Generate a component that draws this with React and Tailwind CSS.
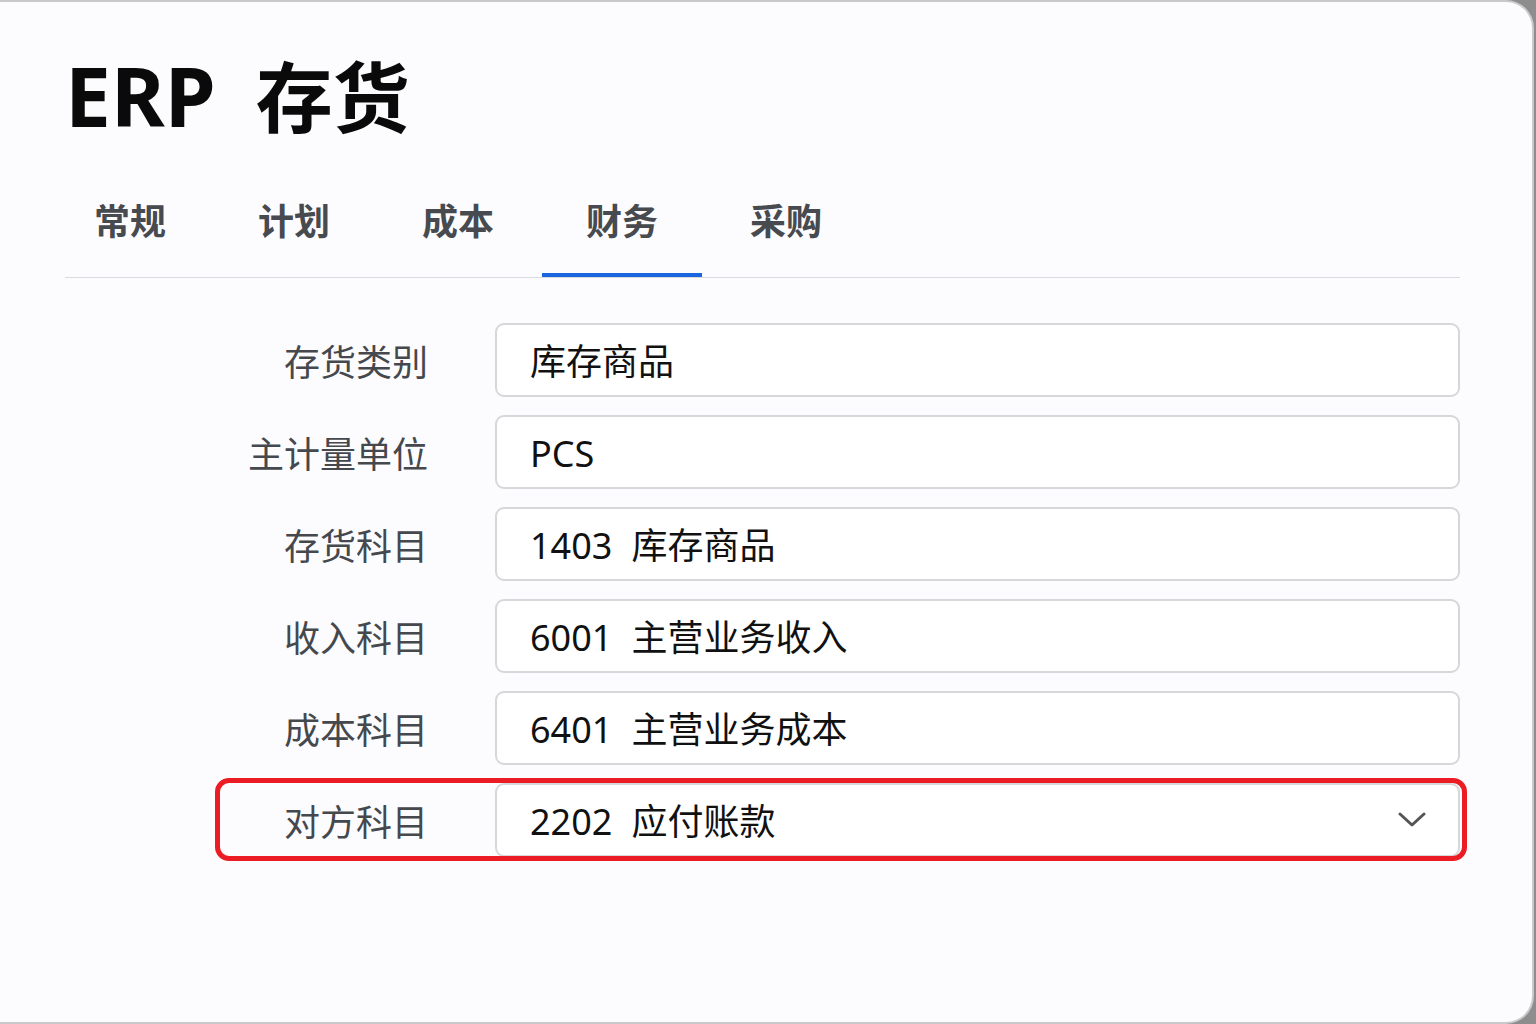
import { useState } from 'react';

const tabs = ['常规', '计划', '成本', '财务', '采购'];

const fields = [
    { label: '存货类别', value: '库存商品' },
    { label: '主计量单位', value: 'PCS' },
    { label: '存货科目', code: '1403', value: '库存商品' },
    { label: '收入科目', code: '6001', value: '主营业务收入' },
    { label: '成本科目', code: '6401', value: '主营业务成本' },
];

function Value({ code, value }) {
    return (
        <span className="whitespace-pre">
            {code && <span>{code}</span>}
            {code && <span className="ml-[19px]" />}
            <span>{value}</span>
        </span>
    );
}

export default function App() {
    const [active, setActive] = useState('财务');

    return (
        <div className="h-[1024px] w-[1536px] overflow-hidden bg-[#8d8d8d] font-['Noto_Sans','Noto_Sans_CJK_SC',sans-serif]">
            <div className="h-[1024px] w-[1534px] rounded-r-[28px] border-2 border-l-0 border-[#c9c9cb] bg-[#fcfcfe] pl-[65px] pr-[72px] pt-[52px]">

                {/* Title */}
                <h1 className="text-[82px] font-bold leading-none text-[#0a0a0a]">
                    ERP<span className="ml-[40px] text-[77px]">存货</span>
                </h1>

                {/* Tabs */}
                <div className="mt-[33px] border-b border-[#d9dadd]">
                    <div className="-ml-[15px] flex gap-[4px]">
                        {tabs.map((t) => (
                            <button
                                key={t}
                                onClick={() => setActive(t)}
                                className={
                                    'flex h-[108px] w-[160px] items-center justify-center border-b-4 pt-[2px] text-[36px] font-semibold leading-none text-[#474a4f] ' +
                                    (active === t ? 'border-[#1a66e0]' : 'border-transparent')
                                }
                            >
                                {t}
                            </button>
                        ))}
                    </div>
                </div>

                {/* Form */}
                <div className="mt-[45px] flex flex-col gap-[18px]">
                    {fields.map((f) => (
                        <div key={f.label} className="grid h-[74px] grid-cols-[363px_1fr] gap-x-[67px]">
                            <div className="flex items-center justify-end pt-[5px] text-[36px] leading-none text-[#45484d]">
                                {f.label}
                            </div>
                            <div className="flex items-center rounded-[9px] border-2 border-[#d6d7da] bg-white pl-[33px] pt-[4px] text-[36px] leading-none text-[#111]">
                                <Value code={f.code} value={f.value} />
                            </div>
                        </div>
                    ))}

                    {/* Highlighted select row */}
                    <div className="relative grid h-[74px] grid-cols-[363px_1fr] gap-x-[67px]">
                        <div className="flex items-center justify-end pt-[5px] text-[36px] leading-none text-[#45484d]">
                            对方科目
                        </div>
                        <div className="flex items-center justify-between rounded-[9px] border-2 border-[#d6d7da] bg-white pl-[33px] pr-[32px] text-[36px] leading-none text-[#111]">
                            <span className="pt-[4px]">
                                <Value code="2202" value="应付账款" />
                            </span>
                            <svg width="28" height="16" viewBox="0 0 28 16" fill="none">
                                <polyline points="2,2 14,13 26,2" stroke="#555" strokeWidth="3" strokeLinecap="round" strokeLinejoin="round" />
                            </svg>
                        </div>
                        <div className="pointer-events-none absolute -bottom-[4px] -right-[7px] -top-[5px] left-[150px] rounded-[14px] border-[5px] border-[#ec1c24]" />
                    </div>
                </div>
            </div>
        </div>
    );
}
